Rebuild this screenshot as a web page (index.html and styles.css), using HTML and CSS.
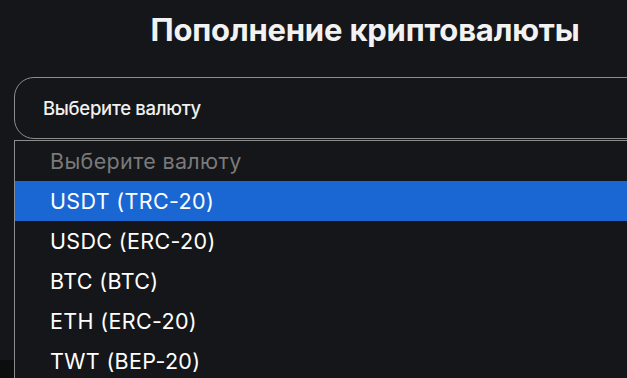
FILE: index.html
```html
<!DOCTYPE html>
<html>
<head>
  <title>Пополнение криптовалюты</title>
  <meta name="viewport" content="width=device-width, initial-scale=1.0">
  <link rel="stylesheet" href="styles.css">
</head>
<body>
<div class="page">
  <h2 class="titulo">Пополнение криптовалюты</h2>

  <div class="select-wrapper">
    <div class="select-box">Выберите валюту</div>

    <div class="select-list">
      <div class="option option-placeholder">Выберите валюту</div>
      <div class="option option-active">USDT (TRC-20)</div>
      <div class="option">USDC (ERC-20)</div>
      <div class="option">BTC (BTC)</div>
      <div class="option">ETH (ERC-20)</div>
      <div class="option">TWT (BEP-20)</div>
    </div>
  </div>

  <div class="bloque-inferior"></div>
</div>
</body>
</html>
```

FILE: styles.css
```css
body {
  margin: 0;
  background-color: #151619;
  font-family: Inter, "Noto Sans", sans-serif;
  overflow: hidden;
}

.page {
  width: 730px;
  height: 378px;
  display: flex;
  flex-direction: column;
}

.titulo {
  margin: 0;
  padding-top: 11px;
  height: 77px;
  box-sizing: border-box;
  text-align: center;
  color: #f2f2f2;
  font-size: 31px;
  font-weight: 700;
  letter-spacing: -0.2px;
}

.select-wrapper {
  position: relative;
  margin-left: 14px;
}

.select-box {
  height: 62px;
  box-sizing: border-box;
  border: 1px solid #8c8c8c;
  border-radius: 20px;
  padding-left: 28px;
  display: flex;
  align-items: center;
  color: #f0f0f0;
  font-size: 18.5px;
  font-weight: 500;
  letter-spacing: -0.3px;
}

/* lista desplegada encima del contenido */
.select-list {
  position: absolute;
  top: 63px;
  left: 0;
  right: 0;
  background-color: #151619;
  border-left: 1px solid #8c8c8c;
  border-top: 1px solid #8c8c8c;
  z-index: 2;
}

.option {
  height: 40px;
  padding-left: 35px;
  display: flex;
  align-items: center;
  color: #ffffff;
  font-size: 21.5px;
  letter-spacing: 0.35px;
}

.option-placeholder {
  color: #7a7a7a;
}

.option-active {
  background-color: #1a67d3;
}

.bloque-inferior {
  margin-top: 221px;
  flex: 1;
  background-color: #0c0d0e;
}
```
